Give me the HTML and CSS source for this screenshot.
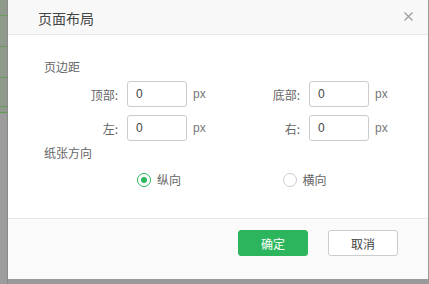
FILE: index.html
```html
<!DOCTYPE html>
<html lang="zh">
<head>
<meta charset="utf-8">
<title>页面布局</title>
<link rel="stylesheet" href="styles.css">
</head>
<body>
<div class="page">
  <div class="backdrop">
    <div class="bk-row r1"></div>
    <div class="bk-row r2"></div>
    <div class="bk-row r3"></div>
    <div class="bk-row r4"></div>
    <div class="bk-row r5"></div>
    <div class="bk-rest"></div>
  </div>
  <div class="dialog">
    <div class="dlg-header">
      <span class="dlg-title">页面布局</span>
      <svg class="dlg-close" width="9" height="9" viewBox="0 0 9 9"><path d="M0.5 0.5 L8.5 8.5 M8.5 0.5 L0.5 8.5" stroke="#999" stroke-width="1.1" fill="none"/></svg>
    </div>
    <div class="dlg-body">
      <div class="section-title">页边距</div>
      <div class="margin-grid">
        <div class="field"><span class="field-label">顶部:</span><input class="field-input" value="0"><span class="unit">px</span></div>
        <div class="field"><span class="field-label">底部:</span><input class="field-input" value="0"><span class="unit">px</span></div>
        <div class="field"><span class="field-label">左:</span><input class="field-input" value="0"><span class="unit">px</span></div>
        <div class="field"><span class="field-label">右:</span><input class="field-input" value="0"><span class="unit">px</span></div>
      </div>
      <div class="section-title orient-title">纸张方向</div>
      <div class="radio-row">
        <label class="radio"><span class="radio-dot checked"></span><span class="radio-text">纵向</span></label>
        <label class="radio"><span class="radio-dot"></span><span class="radio-text">横向</span></label>
      </div>
    </div>
    <div class="dlg-footer">
      <button class="btn btn-primary">确定</button>
      <button class="btn btn-default">取消</button>
    </div>
  </div>
</div>
</body>
</html>
```

FILE: styles.css
```css
html, body {
  margin: 0;
  padding: 0;
}
body {
  width: 429px;
  height: 284px;
  overflow: hidden;
  background: #999999;
  font-family: "Noto Sans CJK SC", "Liberation Sans", sans-serif;
  font-size: 12px;
  color: #666;
}
.page {
  display: flex;
  align-items: flex-start;
  height: 284px;
}
.backdrop {
  width: 8px;
  height: 284px;
  display: flex;
  flex-direction: column;
  box-sizing: border-box;
  border-right: 1px solid #8a8a8a;
}
.bk-row {
  background: #8f998c;
  border-bottom: 1px solid #6a9a5a;
}
.r1 { height: 15px; }
.r2 { height: 30px; }
.r3 { height: 30px; }
.r4 { height: 28px; }
.r5 { height: 5px; border-bottom: 1px solid #5aa04a; }
.bk-rest {
  flex: 1;
  background: #9c9c9c;
}
.dialog {
  width: 420px;
  height: 279px;
  background: #fff;
  display: flex;
  flex-direction: column;
}
.dlg-header {
  height: 34px;
  background: #f8f8f8;
  border-bottom: 1px solid #e9e9e9;
  display: flex;
  align-items: center;
  justify-content: space-between;
  padding: 0 15px 0 30px;
  flex-shrink: 0;
}
.dlg-title {
  font-size: 14px;
  color: #444;
  line-height: 20px;
  padding-top: 1px;
}
.dlg-close {
  display: block;
  margin-top: -1px;
}
.dlg-body {
  flex: 1;
  padding: 24px 0 0 36px;
}
.section-title {
  font-size: 12px;
  line-height: 16px;
  color: #666;
}
.margin-grid {
  display: grid;
  grid-template-columns: 182px 182px;
  row-gap: 8px;
  margin-top: 6px;
}
.field {
  display: flex;
  align-items: center;
}
.field-label {
  width: 74px;
  text-align: right;
  font-size: 12px;
  color: #666;
  margin-right: 9px;
}
.field-input {
  width: 60px;
  height: 26px;
  box-sizing: border-box;
  border: 1px solid #ccc;
  border-radius: 3px;
  padding: 0 8px;
  font-family: "Liberation Sans", sans-serif;
  font-size: 12px;
  color: #444;
  outline: none;
}
.unit {
  margin-left: 6px;
  font-family: "Liberation Sans", sans-serif;
  font-size: 12px;
  color: #777;
}
.orient-title {
  margin-top: 4px;
}
.radio-row {
  display: flex;
  margin-top: 11px;
  padding-left: 93px;
}
.radio {
  display: flex;
  align-items: center;
  width: 154px;
}
.radio-dot {
  width: 14px;
  height: 14px;
  box-sizing: border-box;
  border: 1px solid #ccc;
  border-radius: 50%;
  position: relative;
  margin-right: 6px;
}
.radio-dot.checked {
  border-color: #2db55d;
}
.radio-dot.checked::after {
  content: "";
  position: absolute;
  left: 3px;
  top: 3px;
  width: 6px;
  height: 6px;
  border-radius: 50%;
  background: #2db55d;
}
.radio-text {
  font-size: 12px;
  color: #666;
  line-height: 16px;
}
.dlg-footer {
  height: 49px;
  background: #fafafa;
  border-top: 1px solid #e9e9e9;
  display: flex;
  justify-content: flex-end;
  align-items: flex-start;
  padding: 11px 30px 0 0;
  gap: 20px;
  flex-shrink: 0;
  box-sizing: content-box;
}
.btn {
  width: 70px;
  height: 26px;
  border-radius: 3px;
  font-family: "Noto Sans CJK SC", "Liberation Sans", sans-serif;
  font-size: 12px;
  padding: 0;
  cursor: pointer;
}
.btn-primary {
  background: #2db55d;
  border: 1px solid #2db55d;
  color: #fff;
}
.btn-default {
  background: #fff;
  border: 1px solid #ccc;
  color: #444;
}
```
